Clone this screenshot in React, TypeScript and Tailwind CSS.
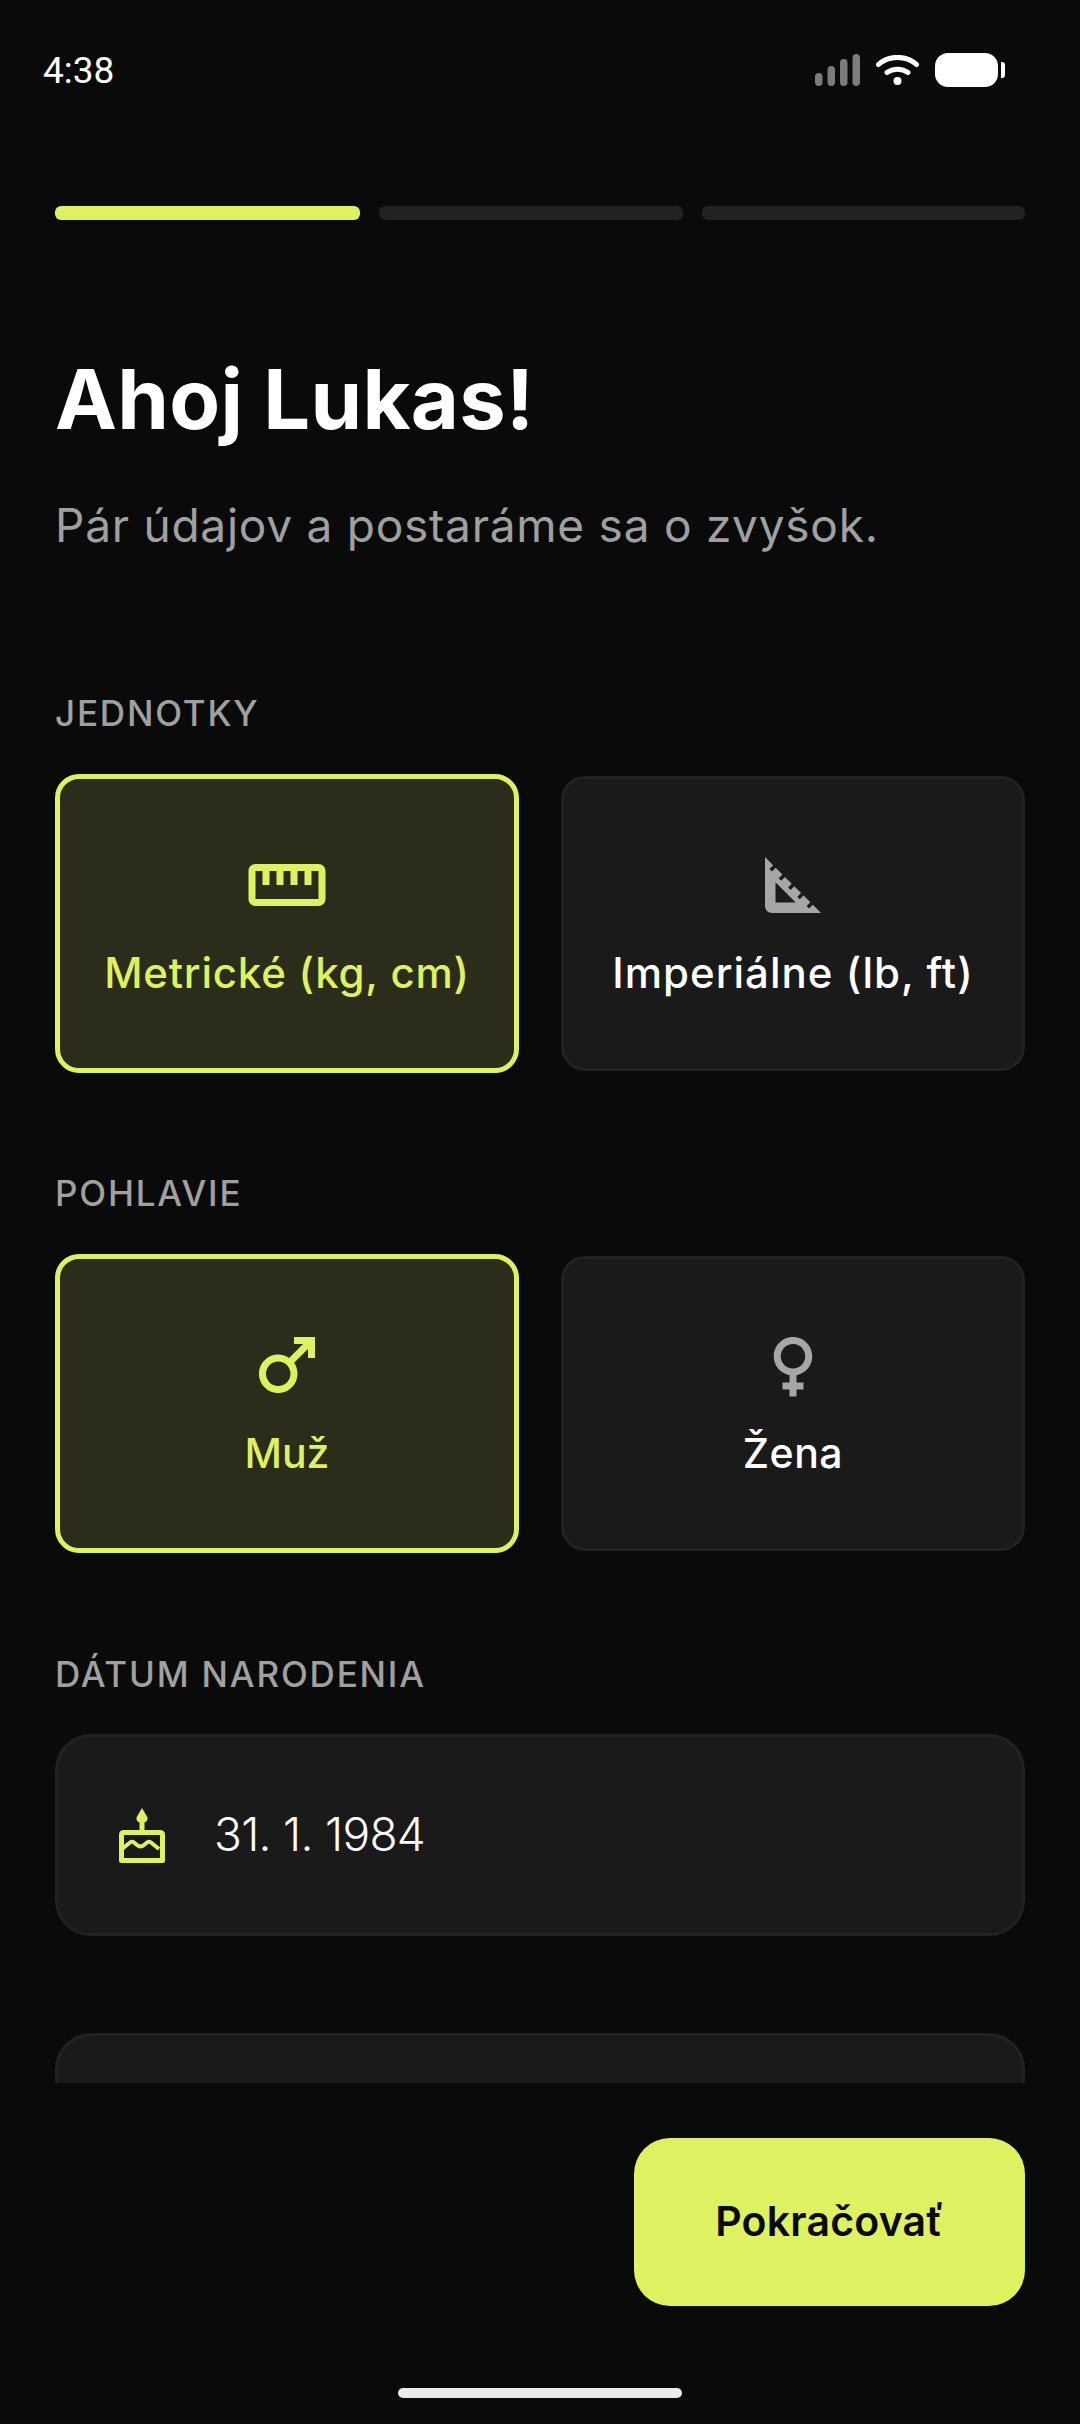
import { MdFemale, MdMale, MdOutlineStraighten, MdSquareFoot } from 'react-icons/md'

const LIME = 'text-[#def160]'

function CakeIcon() {
  return (
    <svg width="46" height="55" viewBox="0 0 46 55" className="text-[#def160]">
      <path d="M23 0l5 8.500c1.500 2.500 0 6.500-5 6.500s-6.500-4-5-6.500z" fill="currentColor" />
      <path d="M20.500 13h5v10h-5z" fill="currentColor" />
      <path
        d="M2.500 52.500V27c0-1.500 1-2.500 2.500-2.500h36c1.500 0 2.500 1 2.500 2.500v25.500z"
        fill="none"
        stroke="currentColor"
        strokeWidth="5"
        strokeLinejoin="round"
      />
      <path
        d="M3 41l8-6.500c1.500-1.200 2.500-1.200 4 0l3 2.500c2.500 2 4.500 2 7 0l3-2.500c1.500-1.200 2.500-1.200 4 0l8 6.500"
        fill="none"
        stroke="currentColor"
        strokeWidth="4"
      />
    </svg>
  )
}

function StatusBar() {
  return (
    <div className="flex h-[70px] items-center justify-between pl-[43px] pr-[75px]">
      <span className="font-['Roboto',sans-serif] text-[37px] leading-none text-white">4:38</span>
      <div className="flex items-center">
        <svg width="45" height="32" viewBox="0 0 45 32" fill="#7c7c7c">
          <rect x="0" y="19" width="7.500" height="13" rx="3.700" />
          <rect x="12.500" y="12" width="7.500" height="20" rx="3.700" />
          <rect x="25" y="5" width="7.500" height="27" rx="3.700" />
          <rect x="37.500" y="0" width="7.500" height="32" rx="3.700" />
        </svg>
        <svg width="43" height="30" viewBox="0 0 43 30" fill="none" stroke="#fff" strokeWidth="5" strokeLinecap="round" className="ml-[16px]">
          <path d="M2.500 9.500C13 0 30 0 40.500 9.500" />
          <path d="M11 17.500c6-4.500 15-4.500 21 0" />
          <circle cx="21.500" cy="26" r="4" fill="#fff" stroke="none" />
        </svg>
        <div className="ml-[16px] h-[34px] w-[63px] rounded-[13px] bg-white" />
        <div className="ml-[3px] h-[16px] w-[4px] rounded-r-[3px] bg-white" />
      </div>
    </div>
  )
}

function Choice({
  label,
  icon,
  selected,
  labelClass,
}: {
  label: string
  icon: React.ReactNode
  selected?: boolean
  labelClass: string
}) {
  const base = 'flex flex-col items-center rounded-[24px] pt-[64px]'
  const state = selected
    ? 'h-[299px] border-[5px] border-[#def160] bg-[#2b2d1a]'
    : 'mt-[2px] h-[295px] border-[3px] border-[#222222] bg-[#1a1a1a]'
  return (
    <div className={`${base} ${state}`}>
      {icon}
      <span className={`mt-[16px] font-medium leading-[60px] ${labelClass} ${selected ? LIME : 'text-white'}`}>{label}</span>
    </div>
  )
}

function SectionLabel({ children }: { children: React.ReactNode }) {
  return <p className="text-[35px] font-medium leading-[40px] tracking-[1.800px] text-[#a0a0a0]">{children}</p>
}

export default function App() {
  return (
    <div className="flex h-[2424px] w-[1080px] flex-col overflow-hidden bg-[#0a0a0a] font-['Inter',sans-serif]">
      <div className="h-[35px]" />
      <StatusBar />

      <div className="mt-[101px] flex gap-[19px] px-[55px]">
        <div className="h-[14px] w-[305px] rounded-[6px] bg-[#def160]" />
        <div className="h-[14px] w-[304px] rounded-[6px] bg-[#222222]" />
        <div className="h-[14px] flex-1 rounded-[6px] bg-[#222222]" />
      </div>

      <div className="h-[1863px] overflow-hidden px-[55px]">
        <h1 className="mt-[135px] text-[83px] font-bold leading-[88px] tracking-[0.300px] text-white">Ahoj Lukas!</h1>
        <p className="mt-[52px] text-[46px] leading-[60px] tracking-[0.750px] text-[#a0a0a0]">Pár údajov a postaráme sa o zvyšok.</p>

        <div className="mt-[138px]">
          <SectionLabel>JEDNOTKY</SectionLabel>
        </div>
        <div className="mt-[41px] grid grid-cols-2 items-start gap-x-[42px]">
          <Choice
            selected
            label="Metrické (kg, cm)"
            labelClass="text-[42px] tracking-[0.800px]"
            icon={<MdOutlineStraighten size={84} className={LIME} />}
          />
          <Choice
            label="Imperiálne (lb, ft)"
            labelClass="text-[42px] tracking-[1px]"
            icon={<MdSquareFoot size={84} className="text-[#a6a6a6]" />}
          />
        </div>

        <div className="mt-[100px]">
          <SectionLabel>POHLAVIE</SectionLabel>
        </div>
        <div className="mt-[41px] grid grid-cols-2 items-start gap-x-[42px]">
          <Choice selected label="Muž" labelClass="text-[41px]" icon={<MdMale size={84} className={LIME} />} />
          <Choice label="Žena" labelClass="text-[41px] tracking-[0.500px]" icon={<MdFemale size={84} className="text-[#a6a6a6]" />} />
        </div>

        <div className="mt-[101px]">
          <SectionLabel>DÁTUM NARODENIA</SectionLabel>
        </div>
        <div className="mt-[40px] flex h-[202px] items-center rounded-[36px] border-[3px] border-[#222222] bg-[#1a1a1a] pl-[61px]">
          <CakeIcon />
          <span className="mb-[2px] ml-[49px] text-[46px] font-light leading-none tracking-[-0.700px] text-white">31. 1. 1984</span>
        </div>

        <div className="mt-[97px] h-[120px] rounded-t-[36px] border-x-[3px] border-t-[3px] border-[#222222] bg-[#1a1a1a]" />
      </div>

      <div className="mt-[55px] flex justify-end px-[55px]">
        <button className="flex h-[168px] w-[391px] items-center justify-center rounded-[36px] bg-[#def160] text-[41px] font-semibold tracking-[0.200px] text-[#0a0a0a]">
          Pokračovať
        </button>
      </div>

      <div className="mt-[82px] flex justify-center">
        <div className="h-[10px] w-[284px] rounded-full bg-[#ebebeb]" />
      </div>
    </div>
  )
}
